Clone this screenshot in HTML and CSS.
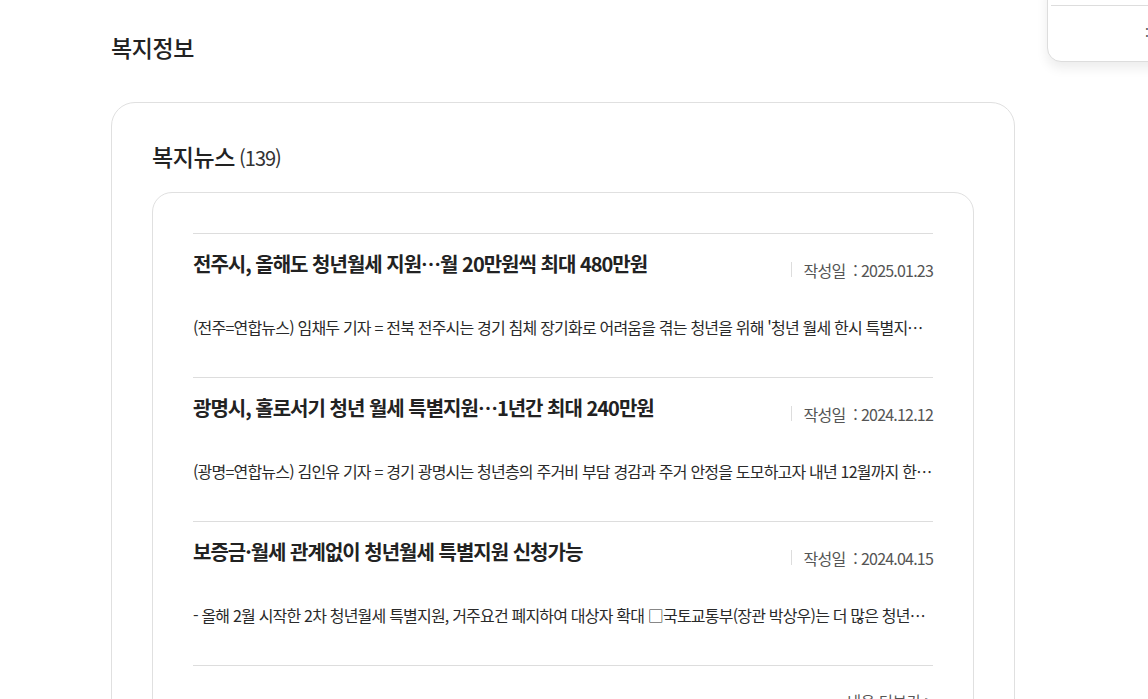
FILE: index.html
```html
<!DOCTYPE html>
<html lang="ko">
<head>
    <meta charset="utf-8">
    <link rel="stylesheet" href="styles.css">
</head>
<body>
    <div class="quick-menu">
        <div class="quick-line"></div>
        <span class="quick-dot">:</span>
    </div>

    <div class="container">
        <h2 class="page-title">복지정보</h2>

        <div class="section-box">
            <h3 class="section-title">복지뉴스<span class="count">(139)</span></h3>

            <div class="news-box">
                <ul class="news-list">
                    <li class="news-item">
                        <div class="news-head">
                            <strong class="news-title">전주시, 올해도 청년월세 지원…월 20만원씩 최대 480만원</strong>
                            <span class="news-date">작성일<em>:</em>2025.01.23</span>
                        </div>
                        <p class="news-desc">(전주=연합뉴스) 임채두 기자 = 전북 전주시는 경기 침체 장기화로 어려움을 겪는 청년을 위해 '청년 월세 한시 특별지원' 사업을 올해도 이어간다고 밝혔다.</p>
                    </li>
                    <li class="news-item">
                        <div class="news-head">
                            <strong class="news-title">광명시, 홀로서기 청년 월세 특별지원…1년간 최대 240만원</strong>
                            <span class="news-date">작성일<em>:</em>2024.12.12</span>
                        </div>
                        <p class="news-desc">(광명=연합뉴스) 김인유 기자 = 경기 광명시는 청년층의 주거비 부담 경감과 주거 안정을 도모하고자 내년 12월까지 한시적으로 청년 월세를 지원한다고 밝혔다.</p>
                    </li>
                    <li class="news-item">
                        <div class="news-head">
                            <strong class="news-title">보증금·월세 관계없이 청년월세 특별지원 신청가능</strong>
                            <span class="news-date">작성일<em>:</em>2024.04.15</span>
                        </div>
                        <p class="news-desc">- 올해 2월 시작한 2차 청년월세 특별지원, 거주요건 폐지하여 대상자 확대 □국토교통부(장관 박상우)는 더 많은 청년들이 월세 지원을 받을 수 있도록 하였다.</p>
                    </li>
                </ul>
                <div class="more-row">
                    <a href="#" class="more-link">내용 더보기 &gt;</a>
                </div>
            </div>
        </div>
    </div>
</body>
</html>
```

FILE: styles.css
```css
body {
    font-family: "Noto Sans CJK KR", "Noto Sans", sans-serif;
    background-color: #fff;
    color: #222;
    margin: 0;
    padding: 0;
}
.container {
    width: 904px;
    margin-left: 111px;
    padding-top: 30px;
}
.page-title {
    font-size: 23px;
    font-weight: 500;
    letter-spacing: -0.4px;
    line-height: 34px;
    margin: 0 0 38px;
    color: #222;
}
.section-box {
    border: 1px solid #e0e0e0;
    border-radius: 24px;
    padding: 37px 40px 0;
}
.section-title {
    font-size: 23px;
    font-weight: 500;
    letter-spacing: -0.4px;
    line-height: 32px;
    margin: 0 0 18px;
    color: #222;
}
.section-title .count {
    font-size: 20px;
    font-weight: 400;
    letter-spacing: -1px;
    margin-left: 4px;
    color: #333;
}
.news-box {
    border: 1px solid #e0e0e0;
    border-radius: 20px;
    padding: 40px 40px 20px;
}
.news-list {
    list-style: none;
    margin: 0;
    padding: 0;
}
.news-item {
    border-top: 1px solid #ddd;
    padding: 18px 0 39px;
}
.news-head {
    display: flex;
    justify-content: space-between;
    align-items: flex-start;
    height: 30px;
}
.news-title {
    font-size: 20px;
    font-weight: 700;
    letter-spacing: -1px;
    line-height: 24px;
    color: #222;
}
.news-date {
    margin-top: 10px;
    height: 15px;
    font-size: 16px;
    letter-spacing: -0.8px;
    color: #555;
    border-left: 1px solid #ddd;
    padding-left: 12px;
    display: flex;
    align-items: center;
}
.news-date em {
    font-style: normal;
    margin: 0 4px 0 8px;
}
.news-desc {
    margin: 34px 0 0;
    font-size: 16px;
    letter-spacing: -0.8px;
    line-height: 22px;
    color: #2a2a2a;
    white-space: nowrap;
    overflow: hidden;
    text-overflow: ellipsis;
}
.more-row {
    border-top: 1px solid #ddd;
    text-align: right;
    padding-top: 22px;
}
.more-link {
    font-size: 15px;
    color: #555;
    text-decoration: none;
}
.quick-menu {
    position: absolute;
    left: 1047px;
    top: -20px;
    width: 160px;
    height: 80px;
    border: 1px solid #ddd;
    border-radius: 14px;
    background: #fff;
    box-shadow: 0 6px 12px rgba(0, 0, 0, 0.08);
}
.quick-line {
    margin: 24px 0 0 3px;
    border-top: 1px solid #ddd;
}
.quick-dot {
    position: absolute;
    left: 97px;
    top: 41px;
    font-size: 14px;
    color: #555;
}
```
